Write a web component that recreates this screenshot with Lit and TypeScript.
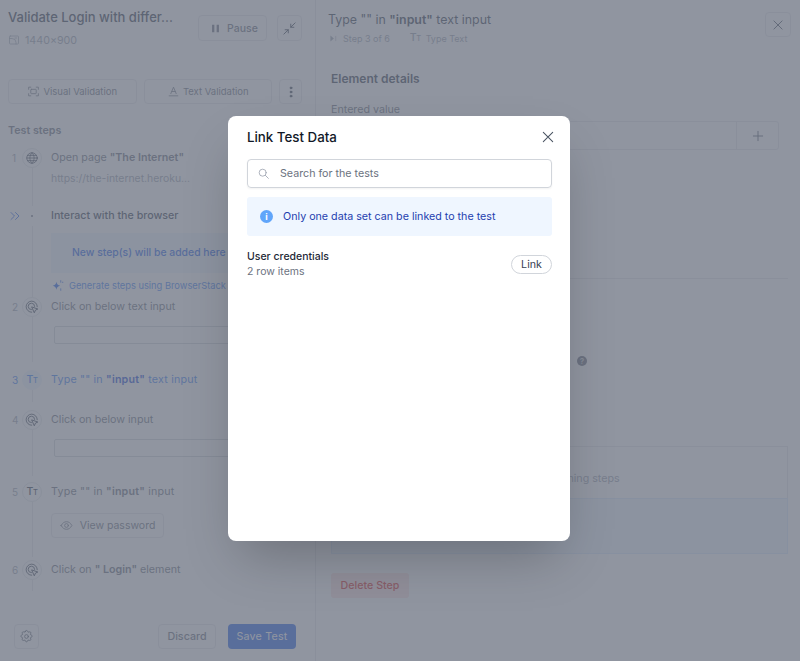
import { LitElement, html, css, svg } from 'lit';
import { customElement } from 'lit/decorators.js';

const icon = (size: number, body: unknown, sw = 1.5) => html`<svg
  width=${size} height=${size} viewBox="0 0 24 24" fill="none" stroke="currentColor"
  stroke-width=${sw} stroke-linecap="round" stroke-linejoin="round">${body}</svg>`;

const icons = {
  image: svg`<rect x="3" y="4" width="18" height="16" rx="1.5"/><path d="M3 9h5a8 8 0 0 1 8 8v3"/><path d="M14 8h3"/>`,
  pause: svg`<path d="M7 4v16M17 4v16" stroke-width="5" stroke-linecap="butt"/>`,
  compress: svg`<path d="M21 3l-7 7M14 5v5h5M3 21l7-7M10 19v-5H5"/>`,
  frame: svg`<path d="M7 4H3v4M17 4h4v4M7 20H3v-4M17 20h4v-4"/><rect x="7" y="8" width="10" height="8" rx="1"/>`,
  textVal: svg`<path d="M7 16l5-12 5 12M9 12h6M4 20h16"/>`,
  dots: svg`<circle cx="12" cy="5" r="1.6" fill="currentColor"/><circle cx="12" cy="12" r="1.6" fill="currentColor"/><circle cx="12" cy="19" r="1.6" fill="currentColor"/>`,
  globe: svg`<circle cx="12" cy="12" r="9"/><path d="M3 12h18M4.500 7.500h15M4.500 16.500h15M12 3c-5 5-5 13 0 18M12 3c5 5 5 13 0 18"/>`,
  click: svg`<path d="M11.500 21a9.500 9.500 0 1 1 9.500-9.500"/><path d="M11 16.500a5.500 5.500 0 1 1 5.500-5.500"/><path d="M12 12l10 3.500-4 1.800-1.800 4z" stroke-width="1.6"/>`,
  eye: svg`<path d="M2 12c3-5 6-7 10-7s7 2 10 7c-3 5-6 7-10 7s-7-2-10-7z"/><circle cx="12" cy="12" r="3.500"/>`,
  gear: svg`<circle cx="12" cy="12" r="3"/><path d="M10.300 3.600c.4-1.800 3-1.800 3.400 0a1.700 1.700 0 0 0 2.600 1.100c1.600-1 3.400.8 2.400 2.400a1.700 1.700 0 0 0 1.100 2.600c1.800.4 1.800 3 0 3.400a1.700 1.700 0 0 0-1.100 2.600c1 1.600-.8 3.400-2.400 2.400a1.700 1.700 0 0 0-2.600 1.100c-.4 1.800-3 1.800-3.400 0a1.700 1.700 0 0 0-2.600-1.100c-1.600 1-3.400-.8-2.400-2.400a1.700 1.700 0 0 0-1.100-2.600c-1.800-.4-1.800-3 0-3.400a1.700 1.700 0 0 0 1.100-2.600c-1-1.600.8-3.400 2.400-2.400a1.700 1.700 0 0 0 2.600-1.100z"/>`,
  close: svg`<path d="M5 5l14 14M19 5L5 19"/>`,
  plus: svg`<path d="M12 4v16M4 12h16"/>`,
  search: svg`<circle cx="10.500" cy="10.500" r="6.500"/><path d="M15.500 15.500L21 21"/>`,
  chevrons: svg`<path d="M4 5l7 7-7 7M13 5l7 7-7 7"/>`,
  sparkle: svg`<path d="M10 5c1 5 2.500 6.500 7 7.500-4.500 1-6 2.500-7 7.500-1-5-2.500-6.500-7-7.500 4.500-1 6-2.500 7-7.500z" fill="currentColor" stroke="none"/><path d="M18 3v3M18 18v3M21 6h1"/>`,
  stepNext: svg`<path d="M5 6l7 6-7 6zM18 6v12" fill="currentColor"/>`,
};

const tt = html`<span class="tt">T<small>T</small></span>`;

@customElement('app-root')
export class AppRoot extends LitElement {
  static styles = css`
    :host {
      color: #1f2937;
      display: block;
      font-family: Inter, "Liberation Sans", sans-serif;
      font-size: 10.7px;
      height: 661px;
      overflow: hidden;
      position: relative;
      width: 800px;
    }
    svg { display: block; flex: none; }
    b { font-weight: 600; }
    .page { background: #fff; display: flex; height: 100%; }

    .btn {
      align-items: center;
      border: 1px solid #e5e7eb;
      border-radius: 4px;
      box-sizing: border-box;
      color: #6b7280;
      display: flex;
      font-weight: 500;
      gap: 4px;
      height: 25px;
      justify-content: center;
    }

    .left {
      border-right: 1px solid #e5e7eb;
      box-sizing: border-box;
      display: flex;
      flex: none;
      flex-direction: column;
      height: 100%;
      width: 316px;
    }
    .top { display: flex; padding: 8px 13px 0 8px; }
    .top-text { flex: 1; }
    .test-title { color: #374151; font-size: 13px; font-weight: 500; line-height: 18px; white-space: nowrap; }
    .res { align-items: center; color: #9ca3af; display: flex; gap: 5px; height: 14px; margin-top: 7px; }
    .top-btns { display: flex; gap: 10px; padding-top: 7px; }
    .pause { font-size: 10.5px; gap: 6px; height: 26px; padding-left: 3px; width: 69px; }
    .square { color: #374151; height: 26px; width: 25px; }
    .tools { display: flex; gap: 7px; padding: 32px 13px 0 8px; }
    .tool { font-size: 9.500px; font-weight: 400; gap: 3px; flex: 1; }
    .kebab { color: #374151; flex: none; width: 23px; }
    .heading { color: #6b7280; font-weight: 600; line-height: 14px; margin: 20px 0 0 8px; }

    .steps { flex: 1; min-height: 0; overflow: hidden; padding: 10px 0 0 8px; }
    .step { display: grid; grid-template-columns: 13px 22px 1fr; column-gap: 0; }
    .num { color: #9ca3af; font-size: 10px; line-height: 20px; padding-left: 4px; }
    .chev { color: #2563eb; display: block; margin-left: -3px; padding-top: 4px; }
    .rail { align-items: center; display: flex; flex-direction: column; }
    .dot {
      align-items: center;
      border: 1px solid #e5e7eb;
      border-radius: 50%;
      box-sizing: border-box;
      color: #374151;
      display: flex;
      flex: none;
      height: 20px;
      justify-content: center;
      width: 20px;
    }
    .dot.small::after { background: #6b7280; border-radius: 50%; content: ""; height: 2px; width: 2px; }
    .dot.small { border: 0; }
    .line { background: #e5e7eb; flex: 1; margin-bottom: var(--gap, 0); width: 1px; }
    .body { min-width: 0; padding-left: 8px; }
    .label { color: #6b7280; line-height: 20px; white-space: nowrap; }
    .label.wide { letter-spacing: 0.2px; }
    .label.strong { color: #374151; font-weight: 500; }
    .tt { font-size: 10.500px; font-weight: 500; letter-spacing: -0.5px; line-height: 1; }
    .tt small { font-size: 7.500px; }
    .active .num, .active .dot, .active .label { color: #3b82f6; }
    .active b { color: #1d4ed8; }
    .active .dot { background: #eff6ff; border-color: #eff6ff; }
    .url { color: #9ca3af; font-size: 10.4px; height: 34px; line-height: 14px; margin-top: 4px; white-space: nowrap; }
    .new-step {
      background: #eff6ff;
      color: #2563eb;
      font-size: 10.400px;
      font-weight: 500;
      height: 40px;
      line-height: 40px;
      margin-top: 7px;
      padding-left: 21px;
      white-space: nowrap;
    }
    .gen { align-items: center; color: #3b82f6; display: flex; font-size: 9.300px; gap: 5px; height: 16px; margin: 4px 0 4px; white-space: nowrap; }
    .gen svg { color: #2563eb; }
    .field { border: 1px solid #d1d5db; border-radius: 2px; box-sizing: border-box; height: 18px; margin: 9px 0 26px 3px; }
    .field.tight { margin-bottom: 25px; }
    .spacer { height: 20px; }
    .spacer.end { height: 11px; }
    .view { font-size: 10.5px; font-weight: 400; gap: 7px; height: 25px; margin: 11px 0 22px; width: 113px; }
    .foot { display: flex; gap: 12px; padding: 0 19px 12px 14px; }
    .foot .gear { color: #4b5563; margin-right: auto; width: 25px; }
    .discard { width: 58px; }
    .save { background: #2563eb; border: 0; color: #fff; font-weight: 400; letter-spacing: 0.2px; width: 68px; }

    .right { box-sizing: border-box; flex: 1; height: 100%; min-width: 0; padding: 0 12px 0 15px; }
    .r-top { display: flex; justify-content: space-between; padding-top: 12px; }
    .r-title { color: #374151; font-size: 12.400px; line-height: 16px; margin-left: -3px; white-space: nowrap; }
    .r-meta { align-items: center; color: #9ca3af; display: flex; font-size: 9px; gap: 5px; margin: 5px 0 0 -2px; }
    .r-meta .tt { margin-left: 15px; }
    .x { color: #374151; height: 25px; margin-right: -3px; width: 26px; }
    .section { color: #374151; font-size: 12px; font-weight: 600; line-height: 16px; margin-top: 27px; }
    .sub { color: #6b7280; line-height: 14px; margin-top: 16px; }
    .input-row { border: 1px solid #e5e7eb; border-radius: 3px; box-sizing: border-box; display: flex; height: 29px; justify-content: flex-end; margin: 4px 9px 0 0; }
    .add { align-items: center; border-left: 1px solid #e5e7eb; color: #4b5563; display: flex; justify-content: center; width: 41px; }
    .rule { background: #e5e7eb; height: 1px; margin-top: 128px; }
    .help { display: flex; height: 10px; justify-content: flex-end; margin: 77px 201px 0 0; }
    .help i { background: #6b7280; border-radius: 50%; color: #d1d5db; font-size: 8px; font-style: normal; font-weight: 700; height: 10px; line-height: 10px; text-align: center; width: 10px; }
    .opts { margin-top: 80px; }
    .opt { align-items: center; border: 1px solid #e5e7eb; box-sizing: border-box; color: #9ca3af; display: flex; height: 53px; padding: 12px 0 0 26px; white-space: nowrap; }
    .opt.sel { background: #eff6ff; border-color: #dbeafe; color: #374151; height: 56px; margin-top: -1px; padding-top: 18px; }
    .delete { background: #fee2e2; border-radius: 3px; color: #dc2626; font-weight: 500; height: 25px; line-height: 25px; margin-top: 19px; text-align: center; width: 78px; }

    .overlay {
      background: rgba(107, 114, 128, 0.75);
      display: flex;
      inset: 0;
      justify-content: center;
      padding: 116px 2px 0 0;
      position: absolute;
    }
    .modal {
      background: #fff;
      border-radius: 8px;
      box-shadow: 0 25px 50px -12px rgba(0, 0, 0, 0.25);
      box-sizing: border-box;
      height: 425px;
      padding: 12px 18px 0 19px;
      width: 342px;
    }
    .m-head { align-items: center; display: flex; height: 18px; justify-content: space-between; }
    .m-title { color: #111827; font-size: 13.300px; font-weight: 500; }
    .m-close { color: #4b5563; margin-right: -4px; }
    .search { align-items: center; border: 1px solid #d1d5db; border-radius: 4px; box-shadow: 0 1px 2px rgba(0, 0, 0, 0.05); box-sizing: border-box; color: #6b7280; display: flex; font-size: 10.7px; gap: 10px; height: 29px; margin-top: 13px; padding-left: 9px; }
    .search svg { color: #9ca3af; }
    .info { align-items: center; background: #eff6ff; border-radius: 3px; color: #1e40af; display: flex; font-size: 10.7px; gap: 10px; height: 39px; margin-top: 9px; padding-left: 13px; }
    .info-i { background: #60a5fa; border-radius: 50%; color: #fff; font-size: 9px; font-weight: 700; height: 13px; line-height: 13px; text-align: center; width: 13px; }
    .row { align-items: center; display: flex; justify-content: space-between; margin-top: 13px; }
    .name { color: #1f2937; font-size: 10.5px; font-weight: 500; line-height: 15px; }
    .count { color: #6b7280; font-size: 10.5px; line-height: 15px; }
    .link { border: 1px solid #d1d5db; border-radius: 10px; box-sizing: border-box; color: #374151; height: 19px; line-height: 17px; text-align: center; width: 41px; }
  `;

  private step(num: unknown, dot: unknown, body: unknown, active = false, gap = 0, small = false) {
    return html`<div class="step ${active ? 'active' : ''}">
      <div class="num">${num}</div>
      <div class="rail">
        <div class="dot ${small ? 'small' : ''}">${dot}</div>
        <div class="line" style="--gap:${gap}px"></div>
      </div>
      <div class="body">${body}</div>
    </div>`;
  }

  render() {
    return html`
      <div class="page">
        <section class="left">
          <div class="top">
            <div class="top-text">
              <div class="test-title">Validate Login with differ...</div>
              <div class="res">${icon(12, icons.image)}<span>1440x900</span></div>
            </div>
            <div class="top-btns">
              <div class="btn pause">${icon(11, icons.pause)}Pause</div>
              <div class="btn square">${icon(15, icons.compress)}</div>
            </div>
          </div>
          <div class="tools">
            <div class="btn tool">${icon(13, icons.frame)}Visual Validation</div>
            <div class="btn tool">${icon(13, icons.textVal)}Text Validation</div>
            <div class="btn kebab">${icon(14, icons.dots)}</div>
          </div>
          <div class="heading">Test steps</div>
          <div class="steps">
            ${this.step('1', icon(14, icons.globe, 1.3), html`
              <div class="label">Open page <b>"The Internet"</b></div>
              <div class="url">https://the-internet.heroku...</div>
            `)}
            ${this.step(html`<span class="chev">${icon(12, icons.chevrons, 1.8)}</span>`, '', html`
              <div class="label strong">Interact with the browser</div>
              <div class="new-step">New step(s) will be added here</div>
              <div class="gen">${icon(13, icons.sparkle)}Generate steps using BrowserStack AI</div>
            `, false, 0, true)}
            ${this.step('2', icon(14, icons.click), html`
              <div class="label">Click on below text input</div>
              <div class="field"></div>
            `, false, 8)}
            ${this.step('3', tt, html`
              <div class="label wide">Type "" in <b>"input"</b> text input</div>
              <div class="spacer"></div>
            `, true, 8)}
            ${this.step('4', icon(14, icons.click), html`
              <div class="label">Click on below input</div>
              <div class="field tight"></div>
            `, false, 6)}
            ${this.step('5', tt, html`
              <div class="label wide">Type "" in <b>"input"</b> input</div>
              <div class="btn view">${icon(13, icons.eye)}View password</div>
            `, false, 3)}
            ${this.step('6', icon(14, icons.click), html`
              <div class="label">Click on <b>" Login"</b> element</div>
              <div class="spacer end"></div>
            `)}
          </div>
          <div class="foot">
            <div class="btn gear">${icon(15, icons.gear, 1.3)}</div>
            <div class="btn discard">Discard</div>
            <div class="btn save">Save Test</div>
          </div>
        </section>

        <section class="right">
          <div class="r-top">
            <div>
              <div class="r-title">Type "" in <b>"input"</b> text input</div>
              <div class="r-meta">${icon(9, icons.stepNext)}<span>Step 3 of 6</span>${tt}<span>Type Text</span></div>
            </div>
            <div class="btn x">${icon(14, icons.close)}</div>
          </div>
          <div class="section">Element details</div>
          <div class="sub">Entered value</div>
          <div class="input-row"><div class="add">${icon(14, icons.plus)}</div></div>
          <div class="rule"></div>
          <div class="help"><i>?</i></div>
          <div class="opts">
            <div class="opt">Continue the test and skip all of the remaining steps</div>
            <div class="opt sel">Stop the test if this step fails, do not run</div>
          </div>
          <div class="delete">Delete Step</div>
        </section>
      </div>

      <div class="overlay">
        <div class="modal">
          <div class="m-head">
            <div class="m-title">Link Test Data</div>
            <div class="m-close">${icon(16, icons.close, 1.6)}</div>
          </div>
          <div class="search">${icon(13, icons.search)}<span>Search for the tests</span></div>
          <div class="info"><div class="info-i">i</div><span>Only one data set can be linked to the test</span></div>
          <div class="row">
            <div>
              <div class="name">User credentials</div>
              <div class="count">2 row items</div>
            </div>
            <div class="link">Link</div>
          </div>
        </div>
      </div>
    `;
  }
}
